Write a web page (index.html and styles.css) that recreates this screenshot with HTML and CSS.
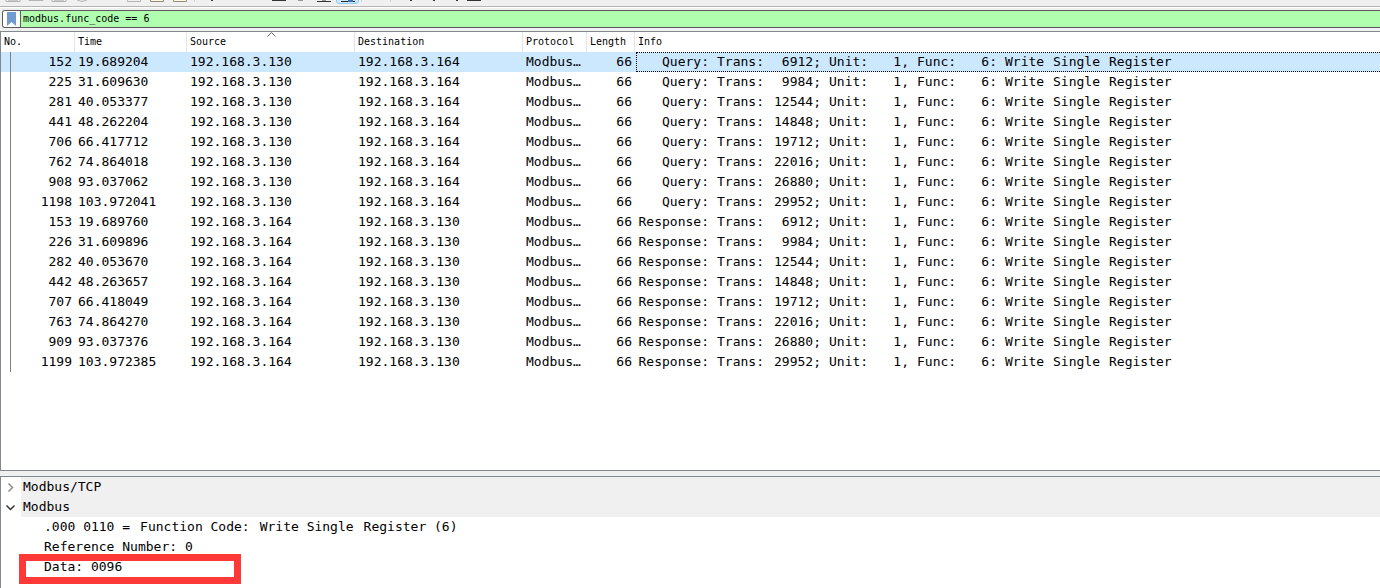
FILE: index.html
```
<!DOCTYPE html>
<html lang="en">
<head>
<meta charset="utf-8">
<title>Packet list</title>
<link rel="stylesheet" href="styles.css">
</head>
<body>
<div class="toolbar">
<svg width="500" height="6" viewBox="0 0 500 6" aria-hidden="true">
<g fill="none" stroke="#b4b4b4"><path d="M6 0v1.5h14V0M29 0v.5h14V0M52 0v1.5h14V0M77 0q5 3 10 0M127.500 0v1.5h13V0"/></g>
<path d="M8 0h10M54 0h10" stroke="#c8c8c8" stroke-width="2"/>
<path d="M150.500 0v1.500h13V0M173.500 0v1.500h13V0" fill="#fffbdc" stroke="#8e8e7c"/>
<path d="M194.500 0v2M361.500 0v2M390.500 0v2" stroke="#cfcfcf"/>
<path d="M211 0h2v1h-2zM272 0h14v1h-14zM317 1h14v1h-14zM410 0h2v1h-2zM433 0h2v1h-2zM456 0h2v1h-2zM467 0h14v1h-14z" fill="#333"/>
<path d="M298 0h5v1h-5zM322 0h4v1h-4z" fill="#999"/>
<path d="M336.500 0v1q0 2.500 2.500 2.500h17q2.500 0 2.500-2.500V0" fill="#cce8ff" stroke="#90c8f6"/>
<path d="M341 1h14v1h-14z" fill="#222"/><path d="M348 0h5v2h-5z" fill="#3d6fb4"/>
</svg>
</div>
<form class="filter">
<button class="bookmark" type="button" aria-label="Manage saved filters"><svg width="9" height="14" viewBox="0 0 9 14"><path d="M0 0h9v14L4.500 10 0 14z" fill="#6f9bd1"/></svg></button>
<input class="filter-text" type="text" aria-label="Display filter" value="modbus.func_code == 6">
</form>
<main class="packets">
<table>
<colgroup><col class="w-no"><col class="w-time"><col class="w-addr"><col class="w-addr"><col class="w-proto"><col class="w-len"><col></colgroup>
<thead><tr><th>No.</th><th>Time</th><th class="sorted">Source<svg class="sort" width="9" height="5" viewBox="0 0 9 5"><path d="M.5 4.500l4-4 4 4" fill="none" stroke="#666"/></svg></th><th>Destination</th><th>Protocol</th><th>Length</th><th>Info</th></tr></thead>
<tbody id="rows"></tbody>
</table>
</main>
<section class="details">
<div class="node head"><button class="twist" type="button" aria-label="Expand"><svg width="9" height="9" viewBox="0 0 9 9"><path d="M2.500.5l4 4-4 4" fill="none" stroke="#8c8c8c" stroke-width="1.500"/></svg></button><span class="label">Modbus/TCP</span></div>
<div class="node head"><button class="twist" type="button" aria-label="Collapse"><svg width="9" height="9" viewBox="0 0 9 9"><path d="M.5 2.500l4 4 4-4" fill="none" stroke="#333" stroke-width="1.500"/></svg></button><span class="label">Modbus</span></div>
<div class="node leaf"><span>.000 0110 =</span> <span>Function Code:</span> <span>Write Single</span> <span>Register (6)</span></div>
<div class="node leaf"><span>Reference Number: 0</span></div>
<div class="node leaf"><span>Data: 0096</span></div>
<div class="mark"></div>
</section>
<script src="packets.js"></script>
</body>
</html>
```
FILE: styles.css
```
* { box-sizing: border-box; }
body {
  margin: 0;
  min-height: 100vh;
  display: flex;
  flex-direction: column;
  background: #f0f0f0;
  color: #000;
  font: 13px/20px "DejaVu Sans Mono", monospace;
  overflow: hidden;
}
svg { display: block; }
button { padding: 0; border: 0; background: none; }
.toolbar { height: 8px; border-bottom: 1px solid #fff; box-shadow: inset 0 -1px #b4b4b4; overflow: hidden; }
.filter {
  display: flex;
  height: 18px;
  margin: 2px 0 3px 2px;
  border: 1px solid #5c5c5c;
  border-right: 0;
  border-radius: 3px 0 0 3px;
  background: #afffaf;
  overflow: hidden;
}
.bookmark { width: 18px; display: flex; justify-content: center; align-items: center; background: #fff; border-right: 1px solid #5c5c5c; }
.filter-text { flex: 1; min-width: 0; padding: 0 2px; border: 0; outline: 0; background: #afffaf; color: #000; font: 10px/16px "DejaVu Sans Mono", monospace; }
.packets { flex: 1; background: #fff; border: 1px solid #828790; border-right: 0; }
table { width: 100%; table-layout: fixed; border-collapse: separate; border-spacing: 0; }
.w-no { width: 74px; }
.w-time { width: 112px; }
.w-addr { width: 168px; }
.w-proto { width: 64px; }
.w-len { width: 48px; }
th { height: 20px; padding: 0 3px; border-right: 1px solid #e5e5e5; text-align: left; font: 10px/20px "DejaVu Sans Mono", monospace; }
th:last-child { border-right: 0; }
.sorted { position: relative; }
.sort { position: absolute; top: 0; left: 50%; margin-left: -4px; }
td { height: 20px; padding: 0 3px; white-space: nowrap; overflow: hidden; }
td:first-child { background: linear-gradient(#808080, #808080) 9px 0 / 1px 100% no-repeat; }
.num { text-align: right; }
.selected { background: #cce8ff; }
.info { display: flex; gap: 8px; height: 20px; line-height: 18px; padding: 0 1px; border: 1px solid transparent; margin-left: 1px; }
td.wrap { padding: 0; }
.selected .info { border: 1px dotted #000; border-right: 0; }
.info span { flex: none; }
.kind { width: 71px; text-align: right; }
.trans { width: 48px; }
.id { width: 48px; text-align: right; }
.key { width: 40px; }
.val { width: 32px; text-align: right; }
.word { width: 48px; }
.details { position: relative; margin-top: 5px; padding-bottom: 11px; background: #fff; border: 1px solid #828790; border-right: 0; border-bottom: 0; }
.node { display: flex; height: 20px; }
.twist { width: 20px; padding-right: 2px; display: flex; align-items: center; justify-content: center; }
.label { flex: 1; padding-left: 2px; background: #f0f0f0; }
.leaf { padding-left: 43px; gap: 10px; }
.mark { position: absolute; left: 18px; top: 77px; width: 222px; height: 30px; border: 7px solid #ff3838; }
```
FILE: packets.js
```
const times = [
  [152, "19.689204", 6912, 153, "19.689760"],
  [225, "31.609630", 9984, 226, "31.609896"],
  [281, "40.053377", 12544, 282, "40.053670"],
  [441, "48.262204", 14848, 442, "48.263657"],
  [706, "66.417712", 19712, 707, "66.418049"],
  [762, "74.864018", 22016, 763, "74.864270"],
  [908, "93.037062", 26880, 909, "93.037376"],
  [1198, "103.972041", 29952, 1199, "103.972385"]
];
const client = "192.168.3.130";
const server = "192.168.3.164";
const row = (no, time, src, dst, kind, id) =>
  `<tr${no === 152 ? ' class="selected"' : ""}><td class="num">${no}</td><td>${time}</td><td>${src}</td><td>${dst}</td><td>Modbus…</td><td class="num">66</td><td class="wrap"><div class="info"><span class="kind">${kind}:</span> <span class="trans">Trans:</span> <span class="id">${id};</span> <span class="key">Unit:</span> <span class="val">1,</span> <span class="key">Func:</span> <span class="val">6:</span> <span class="key">Write</span> <span class="word">Single</span> <span>Register</span></div></td></tr>`;
document.getElementById("rows").innerHTML =
  times.map(t => row(t[0], t[1], client, server, "Query", t[2])).join("") +
  times.map(t => row(t[3], t[4], server, client, "Response", t[2])).join("");
```
